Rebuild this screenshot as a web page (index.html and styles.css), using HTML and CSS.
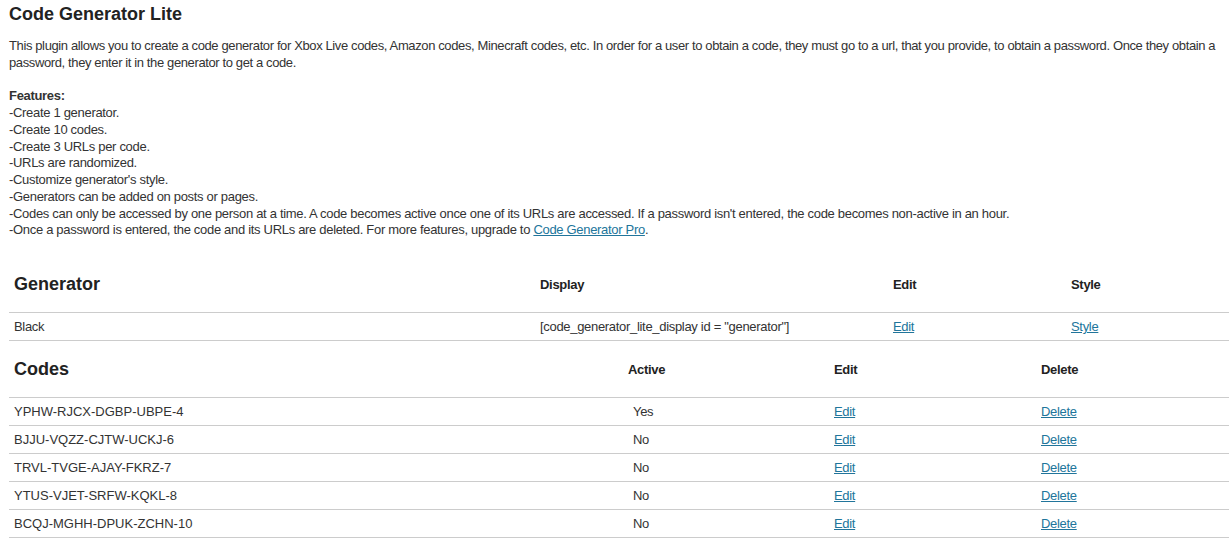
FILE: index.html
```html
<!DOCTYPE html>
<html lang="en">
<head>
<meta charset="utf-8">
<title>Code Generator Lite</title>
<link rel="stylesheet" href="styles.css">
</head>
<body>
<div class="wrap">
  <h1 class="title">Code Generator Lite</h1>
  <p class="intro">This plugin allows you to create a code generator for Xbox Live codes, Amazon codes, Minecraft codes, etc. In order for a user to obtain a code, they must go to a url, that you provide, to obtain a password. Once they obtain a password, they enter it in the generator to get a code.</p>
  <p class="features"><strong>Features:</strong><br>-Create 1 generator.<br>-Create 10 codes.<br>-Create 3 URLs per code.<br>-URLs are randomized.<br>-Customize generator's style.<br>-Generators can be added on posts or pages.<br>-Codes can only be accessed by one person at a time. A code becomes active once one of its URLs are accessed. If a password isn't entered, the code becomes non-active in an hour.<br>-Once a password is entered, the code and its URLs are deleted. For more features, upgrade to <a href="#">Code Generator Pro</a>.</p>

  <div class="grid gen">
    <div class="row head">
      <div class="cell big">Generator</div>
      <div class="cell">Display</div>
      <div class="cell">Edit</div>
      <div class="cell">Style</div>
    </div>
    <div class="row">
      <div class="cell">Black</div>
      <div class="cell">[code_generator_lite_display id = "generator"]</div>
      <div class="cell"><a href="#">Edit</a></div>
      <div class="cell"><a href="#">Style</a></div>
    </div>
  </div>

  <div class="grid codes">
    <div class="row head">
      <div class="cell big">Codes</div>
      <div class="cell">Active</div>
      <div class="cell">Edit</div>
      <div class="cell">Delete</div>
    </div>
    <div class="row">
      <div class="cell code">YPHW-RJCX-DGBP-UBPE-4</div>
      <div class="cell state">Yes</div>
      <div class="cell"><a href="#">Edit</a></div>
      <div class="cell"><a href="#">Delete</a></div>
    </div>
    <div class="row">
      <div class="cell code">BJJU-VQZZ-CJTW-UCKJ-6</div>
      <div class="cell state">No</div>
      <div class="cell"><a href="#">Edit</a></div>
      <div class="cell"><a href="#">Delete</a></div>
    </div>
    <div class="row">
      <div class="cell code">TRVL-TVGE-AJAY-FKRZ-7</div>
      <div class="cell state">No</div>
      <div class="cell"><a href="#">Edit</a></div>
      <div class="cell"><a href="#">Delete</a></div>
    </div>
    <div class="row">
      <div class="cell code">YTUS-VJET-SRFW-KQKL-8</div>
      <div class="cell state">No</div>
      <div class="cell"><a href="#">Edit</a></div>
      <div class="cell"><a href="#">Delete</a></div>
    </div>
    <div class="row">
      <div class="cell code">BCQJ-MGHH-DPUK-ZCHN-10</div>
      <div class="cell state">No</div>
      <div class="cell"><a href="#">Edit</a></div>
      <div class="cell"><a href="#">Delete</a></div>
    </div>
  </div>
</div>
</body>
</html>
```
FILE: styles.css
```css
html, body {
  margin: 0;
  padding: 0;
  background: #ffffff;
}

body {
  font-family: "Liberation Sans", Arial, sans-serif;
  font-size: 13px;
  color: #333333;
  letter-spacing: -0.31px;
}

.wrap {
  padding: 4px 0 0 9px;
}

.title {
  margin: 0;
  font-size: 18px;
  line-height: 20px;
  font-weight: bold;
  color: #222222;
  letter-spacing: 0;
}

.intro,
.features {
  margin: 0;
  line-height: 16.75px;
}

.intro {
  margin-top: 14px;
  letter-spacing: -0.38px;
}

.features {
  margin-top: 16.75px;
  margin-bottom: 17px;
}

.features strong {
  color: #333333;
}

a {
  color: #21759b;
  text-decoration: underline;
}

.grid {
  display: flex;
  flex-direction: column;
}

.row {
  display: grid;
  height: 27px;
  align-items: center;
  border-bottom: 1px solid #cccccc;
}

.row.head {
  height: 56px;
}

.gen .row {
  grid-template-columns: 526px 353px 178px 1fr;
}

.codes .row {
  grid-template-columns: 614px 206px 207px 1fr;
}

.cell {
  padding-left: 5px;
  white-space: nowrap;
}

.head .cell {
  font-weight: bold;
  color: #222222;
}

.head .cell.big {
  font-size: 18px;
  letter-spacing: 0;
}

.cell.code {
  letter-spacing: 0;
}

.cell.state {
  padding-left: 10px;
}
```
